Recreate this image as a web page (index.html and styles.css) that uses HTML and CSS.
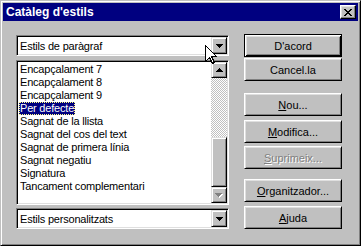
FILE: index.html
```html
<!DOCTYPE html>
<html lang="ca">
<head>
    <meta charset="UTF-8">
    <title>Catàleg d'estils</title>
    <link rel="stylesheet" href="styles.css">
</head>
<body>
    <div class="window">
        <!-- Title bar -->
        <div class="titlebar">
            <span class="title">Catàleg d'estils</span>
            <span class="close">
                <svg width="8" height="7" viewBox="0 0 8 7" shape-rendering="crispEdges">
                    <path d="M0 0h2v1H0zM6 0h2v1H6zM1 1h2v1H1zM5 1h2v1H5zM2 2h4v1H2zM3 3h2v1H3zM2 4h4v1H2zM1 5h2v1H1zM5 5h2v1H5zM0 6h2v1H0zM6 6h2v1H6z"/>
                </svg>
            </span>
        </div>

        <div class="content">
            <!-- Left column: combos and list -->
            <div class="left">
                <div class="combo">
                    <span class="combo-text">Estils de paràgraf</span>
                    <span class="drop">
                        <svg width="7" height="4" viewBox="0 0 7 4" shape-rendering="crispEdges"><path d="M0 0h7v1H0zM1 1h5v1H1zM2 2h3v1H2zM3 3h1v1H3z"/></svg>
                    </span>
                </div>

                <div class="list">
                    <ul class="items">
                        <li>Encapçalament 7</li>
                        <li>Encapçalament 8</li>
                        <li>Encapçalament 9</li>
                        <li><span class="selected">Per defecte</span></li>
                        <li>Sagnat de la llista</li>
                        <li>Sagnat del cos del text</li>
                        <li>Sagnat de primera línia</li>
                        <li>Sagnat negatiu</li>
                        <li>Signatura</li>
                        <li>Tancament complementari</li>
                    </ul>
                    <div class="scrollbar">
                        <span class="sb-btn">
                            <svg width="7" height="4" viewBox="0 0 7 4" shape-rendering="crispEdges"><path d="M3 0h1v1H3zM2 1h3v1H2zM1 2h5v1H1zM0 3h7v1H0z"/></svg>
                        </span>
                        <span class="sb-track"></span>
                        <span class="sb-thumb"></span>
                        <span class="sb-btn disabled">
                            <svg width="8" height="5" viewBox="0 0 8 5" shape-rendering="crispEdges"><path fill="#fff" d="M1 1h7v1H1zM2 2h5v1H2zM3 3h3v1H3zM4 4h1v1H4z"/><path fill="#808080" d="M0 0h7v1H0zM1 1h5v1H1zM2 2h3v1H2zM3 3h1v1H3z"/></svg>
                        </span>
                    </div>
                </div>

                <div class="combo bottom">
                    <span class="combo-text">Estils personalitzats</span>
                    <span class="drop">
                        <svg width="7" height="4" viewBox="0 0 7 4" shape-rendering="crispEdges"><path d="M0 0h7v1H0zM1 1h5v1H1zM2 2h3v1H2zM3 3h1v1H3z"/></svg>
                    </span>
                </div>
            </div>

            <!-- Right column: buttons -->
            <div class="buttons">
                <button class="btn default">D'acord</button>
                <button class="btn cancel">Cancel.la</button>
                <button class="btn new"><u>N</u>ou...</button>
                <button class="btn edit"><u>M</u>odifica...</button>
                <button class="btn remove" disabled><u>S</u>uprimeix...</button>
                <button class="btn organizer"><u>O</u>rganitzador...</button>
                <button class="btn help"><u>A</u>juda</button>
            </div>
        </div>

        <!-- Mouse pointer -->
        <svg class="cursor" width="12" height="19" viewBox="0 0 12 19" shape-rendering="crispEdges">
            <path d="M0.5 0.5V16.5L4.5 12.5L7.5 18.5L9.5 17.5L6.5 11.5H11.5Z" fill="#fff" stroke="#000" stroke-width="1"/>
        </svg>
    </div>
</body>
</html>
```

FILE: styles.css
```css
/* General */
body {
    margin: 0;
    padding: 0;
    font-family: "Liberation Sans", Arial, sans-serif;
    font-size: 11px;
    color: #000;
    background: #c0c0c0;
}

.window {
    position: relative;
    width: 361px;
    height: 246px;
    box-sizing: border-box;
    padding: 2px;
    background: #c0c0c0;
    border: 1px solid;
    border-color: #c0c0c0 #000 #000 #c0c0c0;
    box-shadow: inset 1px 1px #fff, inset -1px -1px #808080;
}

/* Title bar */
.titlebar {
    display: flex;
    justify-content: space-between;
    align-items: center;
    height: 18px;
    padding: 0 2px 0 3px;
    background: #000080;
    color: #fff;
}

.title {
    font-weight: bold;
    font-size: 12px;
}

.close {
    display: flex;
    justify-content: center;
    align-items: center;
    width: 16px;
    height: 14px;
    box-sizing: border-box;
    background: #c0c0c0;
    border: 1px solid;
    border-color: #fff #000 #000 #fff;
    box-shadow: inset -1px -1px #808080, inset 1px 1px #dfdfdf;
}

/* Layout */
.content {
    display: flex;
    gap: 15px;
    padding: 14px 0 0 13px;
}

.left {
    display: flex;
    flex-direction: column;
    width: 213px;
    letter-spacing: -0.2px;
}

/* Sunken fields */
.combo, .list {
    box-sizing: border-box;
    background: #fff;
    border: 1px solid;
    border-color: #808080 #fff #fff #808080;
    box-shadow: inset 1px 1px #000, inset -1px -1px #dfdfdf;
}

.combo {
    display: flex;
    align-items: center;
    height: 21px;
    padding: 1px;
}

.combo.bottom {
    margin-top: 3px;
}

.combo-text {
    flex: 1;
    padding-left: 2px;
}

.drop, .sb-btn {
    display: flex;
    justify-content: center;
    align-items: center;
    box-sizing: border-box;
    width: 16px;
    background: #c0c0c0;
    border: 1px solid;
    border-color: #dfdfdf #000 #000 #dfdfdf;
    box-shadow: inset 1px 1px #fff, inset -1px -1px #808080;
}

.drop {
    height: 17px;
}

/* List */
.list {
    display: flex;
    height: 145px;
    margin-top: 4px;
    padding: 1px;
}

.items {
    flex: 1;
    list-style: none;
    margin: 0;
    padding: 0 0 0 1px;
}

.items li {
    height: 13px;
    line-height: 13px;
    padding-left: 1px;
    white-space: nowrap;
}

.items li:first-child {
    margin-top: 1px;
}

.selected {
    display: inline-block;
    margin-left: -1px;
    padding: 0 1px;
    background: #000080;
    color: #fff;
    outline: 1px dotted #ffff80;
    outline-offset: -1px;
}

/* Scrollbar */
.scrollbar {
    display: flex;
    flex-direction: column;
    width: 16px;
}

.sb-btn {
    height: 16px;
}

.sb-track {
    flex: 1;
    background: repeating-conic-gradient(#c0c0c0 0 25%, #fff 0 50%) 0 0 / 2px 2px;
}

.sb-thumb {
    height: 50px;
    box-sizing: border-box;
    background: #c0c0c0;
    border: 1px solid;
    border-color: #dfdfdf #000 #000 #dfdfdf;
    box-shadow: inset 1px 1px #fff, inset -1px -1px #808080;
}

/* Buttons */
.buttons {
    display: flex;
    flex-direction: column;
    width: 98px;
}

.btn {
    height: 23px;
    box-sizing: border-box;
    padding: 0;
    font-family: inherit;
    font-size: 11px;
    color: #000;
    background: #c0c0c0;
    border: 1px solid;
    border-color: #fff #000 #000 #fff;
    box-shadow: inset 1px 1px #dfdfdf, inset -1px -1px #808080;
}

.btn.default {
    margin-top: -1px;
    border-color: #000;
    box-shadow: inset 1px 1px #fff, inset -1px -1px #000, inset 2px 2px #dfdfdf, inset -2px -2px #808080;
}

.btn.cancel { margin-top: 1px; }
.btn.new { margin-top: 12px; }
.btn.edit { margin-top: 4px; }
.btn.remove { margin-top: 3px; }
.btn.organizer { margin-top: 10px; }
.btn.help { margin-top: 4px; }

.btn:disabled {
    color: #808080;
    text-shadow: 1px 1px #fff;
}

/* Pointer over the combo */
.cursor {
    position: absolute;
    left: 204px;
    top: 44px;
}
```
